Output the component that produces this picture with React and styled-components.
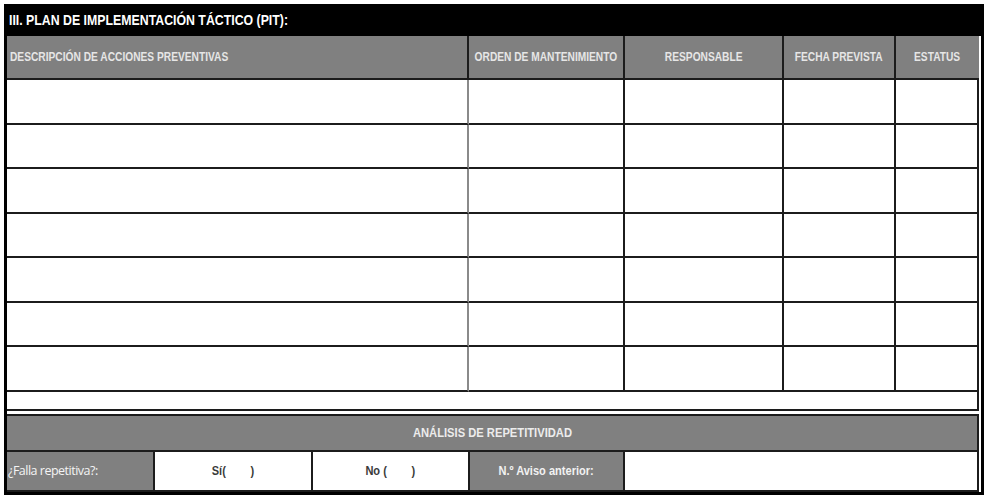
import React from 'react';
import styled, { createGlobalStyle } from 'styled-components';

const GlobalStyle = createGlobalStyle`
  html, body {
    margin: 0;
    padding: 0;
    background: #fff;
  }
  body {
    font-family: "Liberation Sans", Arial, sans-serif;
  }
`;

const LINE = '#1c1c1c';
const GRAY = '#808080';

// condensed look of the original narrow font
const Narrow = styled.span`
  display: inline-block;
  white-space: pre;
  font-weight: bold;
  font-size: ${p => p.$size || 12}px;
  transform: scaleX(${p => p.$scale || 0.85});
  transform-origin: ${p => (p.$left ? 'left center' : 'center center')};
`;

// outer frame of the sheet
const Sheet = styled.div`
  margin: 4px 0 0 4px;
  width: 980px;
  box-sizing: border-box;
  border-left: 3px solid #000;
  border-right: 3px solid #000;
  border-bottom: 3px solid #000;
`;

const TitleBar = styled.div`
  height: 32px;
  background: #000;
  color: #fff;
  display: flex;
  align-items: center;
  padding-left: 5px;
  margin-left: -3px;
  margin-right: -3px;
`;

const Grid = styled.div`
  display: grid;
  grid-template-columns: 462px 156px 159px 112px 83px;
  width: 972px;
  box-sizing: border-box;
  border-right: 2px solid ${LINE};
`;

const HeadCell = styled.div`
  height: 44px;
  box-sizing: border-box;
  background: ${GRAY};
  color: #e6e6e6;
  display: flex;
  align-items: center;
  justify-content: ${p => (p.$left ? 'flex-start' : 'center')};
  padding-left: ${p => (p.$left ? '3px' : '0')};
  border-bottom: 2px solid ${LINE};
  border-right: ${p => (p.$last ? 'none' : `2px solid ${LINE}`)};
  overflow: hidden;
`;

const Cell = styled.div`
  height: 44.5px;
  box-sizing: border-box;
  border-bottom: 2px solid ${LINE};
  border-right: ${p =>
    p.$last ? 'none' : p.$soft ? '2px solid #8a8a8a' : `2px solid ${LINE}`};
`;

const BlankRow = styled.div`
  height: 19px;
  width: 972px;
  box-sizing: border-box;
  border-right: 2px solid ${LINE};
  border-bottom: 2px solid ${LINE};
`;

const Section = styled.div`
  margin-top: 3px;
  width: 972px;
  box-sizing: border-box;
  border-top: 2px solid ${LINE};
  border-right: 2px solid ${LINE};
  border-bottom: 2px solid ${LINE};
`;

const SectionTitle = styled.div`
  height: 36px;
  box-sizing: border-box;
  background: ${GRAY};
  color: #ececec;
  display: flex;
  align-items: center;
  justify-content: center;
  border-bottom: 2px solid ${LINE};
`;

const AnswerRow = styled.div`
  display: grid;
  grid-template-columns: 148px 158px 157px 155px 1fr;
  height: 38px;
`;

const Answer = styled.div`
  box-sizing: border-box;
  background: ${p => (p.$gray ? GRAY : '#fff')};
  color: ${p => (p.$gray ? '#f2f2f2' : '#3a3a3a')};
  display: flex;
  align-items: center;
  justify-content: ${p => (p.$left ? 'flex-start' : 'center')};
  padding-left: ${p => (p.$left ? '1px' : '0')};
  border-right: ${p => (p.$last ? 'none' : `2px solid ${LINE}`)};
  white-space: pre;
`;

const PlainText = styled.span`
  font-family: "Open Sans", "Liberation Sans", sans-serif;
  font-size: 12.5px;
  letter-spacing: -0.5px;
  color: #f4f4f4;
`;

const columns = [
  { label: 'DESCRIPCIÓN DE ACCIONES PREVENTIVAS', left: true, soft: true },
  { label: 'ORDEN DE MANTENIMIENTO' },
  { label: 'RESPONSABLE' },
  { label: 'FECHA PREVISTA' },
  { label: 'ESTATUS', last: true },
];

const rows = [1, 2, 3, 4, 5, 6, 7];

export default function App() {
  return (
    <>
      <GlobalStyle />
      <Sheet>
        <TitleBar>
          <Narrow $left $size={14} $scale={0.88}>
            III. PLAN DE IMPLEMENTACIÓN TÁCTICO (PIT):
          </Narrow>
        </TitleBar>
        <Grid>
          {columns.map(c => (
            <HeadCell key={c.label} $left={c.left} $last={c.last}>
              <Narrow $left={c.left} $size={12} $scale={0.85}>
                {c.label}
              </Narrow>
            </HeadCell>
          ))}
          {rows.map(r =>
            columns.map(c => (
              <Cell key={r + c.label} $soft={c.soft} $last={c.last} />
            ))
          )}
        </Grid>
        <BlankRow />
        <Section>
          <SectionTitle>
            <Narrow $size={13} $scale={0.86}>ANÁLISIS DE REPETITIVIDAD</Narrow>
          </SectionTitle>
          <AnswerRow>
            <Answer $gray $left>
              <PlainText>¿Falla repetitiva?:</PlainText>
            </Answer>
            <Answer>
              <Narrow $size={13} $scale={0.85}>{'Sí(        )'}</Narrow>
            </Answer>
            <Answer>
              <Narrow $size={13} $scale={0.85}>{'No (        )'}</Narrow>
            </Answer>
            <Answer $gray>
              <Narrow $size={13} $scale={0.85}>N.º Aviso anterior:</Narrow>
            </Answer>
            <Answer $last />
          </AnswerRow>
        </Section>
      </Sheet>
    </>
  );
}
